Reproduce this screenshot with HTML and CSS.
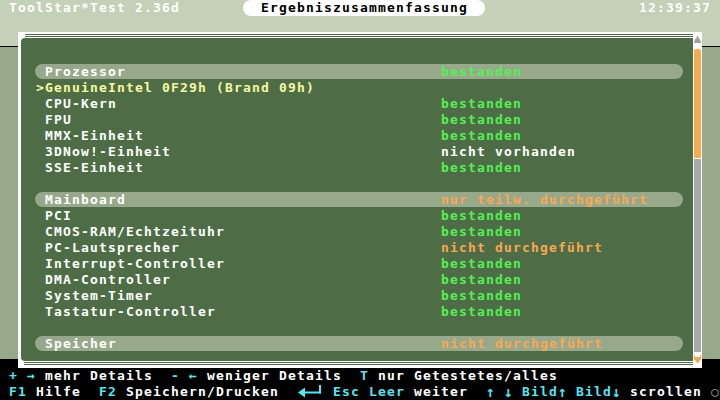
FILE: index.html
```html
<!DOCTYPE html>
<html lang="de">
<head>
<meta charset="utf-8">
<title>ToolStar*Test</title>
<link rel="stylesheet" href="styles.css">
</head>
<body>
<div class="screen">
  <header class="topbar">
    <span class="app">ToolStar*Test 2.36d</span>
    <span class="title">Ergebniszusammenfassung</span>
    <span class="clock">12:39:37</span>
  </header>

  <section class="frame">
    <div class="panel">
      <div class="rule rule-top"></div>
      <div class="body">
        <div class="row head"><span class="label">Prozessor</span><span class="ok">bestanden</span></div>
        <div class="row"><span class="label sel">&gt;GenuineIntel 0F29h (Brand 09h)</span></div>
        <div class="row"><span class="label">CPU-Kern</span><span class="ok">bestanden</span></div>
        <div class="row"><span class="label">FPU</span><span class="ok">bestanden</span></div>
        <div class="row"><span class="label">MMX-Einheit</span><span class="ok">bestanden</span></div>
        <div class="row"><span class="label">3DNow!-Einheit</span><span class="na">nicht vorhanden</span></div>
        <div class="row"><span class="label">SSE-Einheit</span><span class="ok">bestanden</span></div>
        <div class="gap"></div>
        <div class="row head"><span class="label">Mainboard</span><span class="warn">nur teilw. durchgeführt</span></div>
        <div class="row"><span class="label">PCI</span><span class="ok">bestanden</span></div>
        <div class="row"><span class="label">CMOS-RAM/Echtzeituhr</span><span class="ok">bestanden</span></div>
        <div class="row"><span class="label">PC-Lautsprecher</span><span class="warn">nicht durchgeführt</span></div>
        <div class="row"><span class="label">Interrupt-Controller</span><span class="ok">bestanden</span></div>
        <div class="row"><span class="label">DMA-Controller</span><span class="ok">bestanden</span></div>
        <div class="row"><span class="label">System-Timer</span><span class="ok">bestanden</span></div>
        <div class="row"><span class="label">Tastatur-Controller</span><span class="ok">bestanden</span></div>
        <div class="gap"></div>
        <div class="row head"><span class="label">Speicher</span><span class="warn">nicht durchgeführt</span></div>
      </div>
      <div class="rule rule-bottom"></div>
    </div>
    <div class="scrollbar">
      <svg class="arrow-up" viewBox="0 0 7 7" width="7" height="7"><path d="M3 0h1l1 3h1l1 4H0l1-4h1z" fill="#a0a0a0"/></svg>
      <div class="thumb"></div>
      <div class="track"></div>
      <svg class="arrow-down" viewBox="0 0 7 8" width="7" height="8"><path d="M0 0h1v2h5V0h1v4L4 8H3L0 4z" fill="#f8a852"/></svg>
    </div>
  </section>

  <footer class="help">
    <div class="line"><span class="k">+ →</span> mehr Details  <span class="k">- ←</span> weniger Details  <span class="k">T</span> nur Getestetes/alles</div>
    <div class="line"><span class="k">F1</span> Hilfe  <span class="k">F2</span> Speichern/Drucken  <svg class="enter" viewBox="0 0 27 16" width="27" height="16"><path d="M1 8.5L8 3.5V13.5Z" fill="#55e6f2"/><rect x="8" y="7.5" width="16" height="2" fill="#55e6f2"/><rect x="22" y="1" width="2" height="8.5" fill="#55e6f2"/></svg> <span class="k">Esc Leer</span> weiter  <span class="k"><span class="arr">↑</span> <span class="arr">↓</span> Bild<span class="arr">↑</span> Bild<span class="arr">↓</span></span> scrollen <span class="dim">○</span></div>
  </footer>
</div>
</body>
</html>
```

FILE: styles.css
```css
html, body {
  margin: 0;
  padding: 0;
}

body {
  width: 720px;
  height: 400px;
  overflow: hidden;
  background: #000;
}

.screen {
  width: 720px;
  height: 400px;
  display: flex;
  flex-direction: column;
  background: linear-gradient(to bottom,
    #c4d0b8 0, #c4d0b8 46px,
    #000 46px, #000 47px,
    #98a88a 47px, #98a88a 359px,
    #000 359px, #000 400px);
  font-family: "DejaVu Sans Mono", monospace;
  font-size: 13px;
  font-weight: bold;
  letter-spacing: 1.1733px;
  line-height: 16px;
  color: #fff;
}

/* ---------- top bar ---------- */
.topbar {
  height: 16px;
  display: flex;
  padding-left: 9px;
  white-space: pre;
}

.title {
  box-sizing: border-box;
  margin-left: 63px;
  width: 242px;
  height: 16px;
  padding-left: 18px;
  background: #fff;
  color: #000;
  border-radius: 8px;
}

.clock {
  margin-left: 154px;
}

/* ---------- window frame ---------- */
.frame {
  box-sizing: border-box;
  margin: 16px 0 0 18px;
  width: 684px;
  height: 336px;
  padding-left: 3px;
  background: #fff;
  display: flex;
}

.panel {
  flex: 1;
  display: flex;
  flex-direction: column;
}

.rule-top {
  height: 6px;
  margin-left: 4px;
  border-top-left-radius: 4px;
  background: linear-gradient(to bottom,
    #fff 0, #fff 2px,
    #4e6d46 2px, #4e6d46 3px,
    #fff 3px, #fff 4px,
    #4e6d46 4px, #4e6d46 5px,
    #fff 5px, #fff 6px);
}

.body {
  flex: 1;
  box-sizing: border-box;
  padding-top: 26px;
  background: #4e6d46;
  border-radius: 4px 0 0 4px;
}

.rule-bottom {
  height: 7px;
  margin-left: 3px;
  background: linear-gradient(to bottom,
    #fff 0, #fff 1px,
    #4e6d46 1px, #4e6d46 2px,
    #fff 2px, #fff 3px,
    #4e6d46 3px, #4e6d46 4px,
    #fff 4px, #fff 7px);
}

.row {
  box-sizing: border-box;
  display: flex;
  height: 16px;
  width: 648px;
  margin-left: 14px;
  padding-left: 10px;
  white-space: pre;
}

.row.head {
  height: 15px;
  margin-bottom: 1px;
  background: #98a88a;
  border-radius: 8px;
}

.gap {
  height: 16px;
}

.label {
  width: 396px;
  flex: none;
}

.label.sel {
  margin-left: -9px;
  color: #f8f8a0;
}

.ok { color: #55f055; }
.warn { color: #f8a852; }
.na { color: #fff; }

/* ---------- scrollbar ---------- */
.scrollbar {
  width: 9px;
  box-sizing: border-box;
  padding-top: 4px;
  display: flex;
  flex-direction: column;
  align-items: center;
  background: #fff;
}

.arrow-up {
  display: block;
  margin-bottom: 6px;
}

.thumb {
  width: 7px;
  height: 109px;
  background: #f8a852;
  border-radius: 2px 2px 1px 1px;
}

.track {
  width: 7px;
  height: 193px;
  margin-top: 1px;
  background: #a8a8a8;
}

.arrow-down {
  display: block;
  margin-top: 3px;
}

/* ---------- help bar ---------- */
.help {
  height: 32px;
}

.line {
  height: 16px;
  padding-left: 9px;
  white-space: pre;
}

.k { color: #55e6f2; }
.dim { color: #9a9a9a; font-weight: normal; }

.arr {
  display: inline-block;
  width: 9px;
  height: 16px;
  overflow: hidden;
  letter-spacing: 0;
  text-align: center;
  font-size: 14.9px;
  line-height: 16px;
  vertical-align: top;
}

.enter {
  vertical-align: top;
}
```
